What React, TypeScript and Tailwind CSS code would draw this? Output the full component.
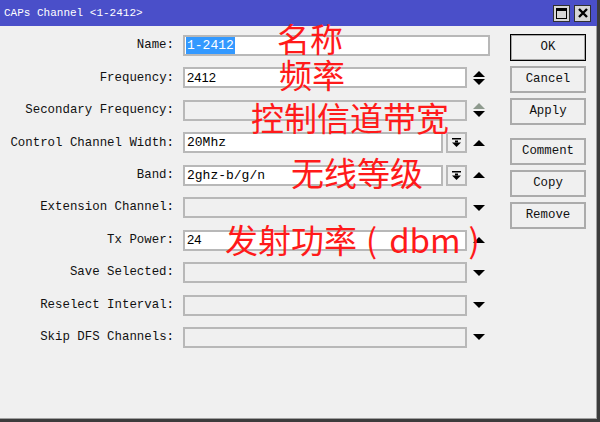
import React from 'react';

type Trail = 'updown' | 'updown-dim' | 'up' | 'down' | 'none';

type Row = {
  label: string;
  value?: string;
  mono?: boolean;
  selected?: boolean;
  enabled?: boolean;
  dropdown?: boolean;
  trail: Trail;
  wide?: boolean;
};

const rows: Row[] = [
  { label: 'Name:', value: '1-2412', mono: true, selected: true, enabled: true, trail: 'none', wide: true },
  { label: 'Frequency:', value: '2412', enabled: true, trail: 'updown' },
  { label: 'Secondary Frequency:', trail: 'updown-dim' },
  { label: 'Control Channel Width:', value: '20Mhz', mono: true, enabled: true, dropdown: true, trail: 'up' },
  { label: 'Band:', value: '2ghz-b/g/n', mono: true, enabled: true, dropdown: true, trail: 'up' },
  { label: 'Extension Channel:', trail: 'down' },
  { label: 'Tx Power:', value: '24', enabled: true, trail: 'up' },
  { label: 'Save Selected:', trail: 'down' },
  { label: 'Reselect Interval:', trail: 'down' },
  { label: 'Skip DFS Channels:', trail: 'down' },
];

const Up = ({ color = '#000' }: { color?: string }) => (
  <svg width="12" height="6" viewBox="0 0 12 6">
    <polygon points="0,6 12,6 6,0" fill={color} />
  </svg>
);

const Down = ({ color = '#000' }: { color?: string }) => (
  <svg width="12" height="6" viewBox="0 0 12 6">
    <polygon points="0,0 12,0 6,6" fill={color} />
  </svg>
);

function TrailIcon({ kind }: { kind: Trail }) {
  if (kind === 'none') return null;
  return (
    <div className="ml-[6px] w-[12px] flex flex-col items-center justify-center gap-[2px]">
      {kind === 'updown' && (
        <>
          <Up />
          <Down />
        </>
      )}
      {kind === 'updown-dim' && (
        <>
          <Up color="#8e9a8e" />
          <Down />
        </>
      )}
      {kind === 'up' && <Up />}
      {kind === 'down' && <Down />}
    </div>
  );
}

function DropButton() {
  return (
    <div className="ml-[3px] w-[21px] h-[21px] border-2 border-[#b8b8b8] bg-[#f0f0f0] flex items-center justify-center">
      <svg width="9" height="9" viewBox="0 0 9 9">
        <rect x="0" y="0" width="9" height="1.5" fill="#000" />
        <rect x="3" y="2.5" width="3" height="2" fill="#000" />
        <polygon points="0,4.5 9,4.5 4.5,9" fill="#000" />
      </svg>
    </div>
  );
}

function FormRow({ row }: { row: Row }) {
  const width = row.wide ? 'w-[307px]' : row.dropdown ? 'w-[260px]' : 'w-[284px]';
  return (
    <div className="flex items-center h-[21px]">
      <div className="w-[174px] shrink-0 text-right text-[12.4px] text-[#111] whitespace-pre">{row.label}</div>
      <div
        className={`ml-[9px] shrink-0 h-[21px] ${width} border-2 border-[#b8b8b8] flex items-center pl-[1px] ${
          row.enabled ? 'bg-white' : 'bg-[#f0f0f0]'
        }`}
      >
        {row.value && (
          <span
            className={`h-[17px] flex items-center px-[1px] ${
              row.mono ? "font-['Liberation_Mono'] text-[13px]" : "font-['Liberation_Sans'] text-[13px]"
            } ${row.selected ? 'bg-[#3399ff] text-white' : 'text-black'}`}
          >
            {row.value}
          </span>
        )}
      </div>
      {row.dropdown && <DropButton />}
      <TrailIcon kind={row.trail} />
    </div>
  );
}

function SideButton({ label, primary }: { label: string; primary?: boolean }) {
  return (
    <div
      className={`w-[76px] h-[27px] flex items-center justify-center text-[12.4px] text-[#111] bg-[#f0f0f0] ${
        primary ? 'border border-black shadow-[inset_0_0_0_1px_#a8a8a8]' : 'border-2 border-[#ababab]'
      }`}
    >
      {label}
    </div>
  );
}

export default function App() {
  return (
    <div className="relative w-[600px] h-[422px] flex flex-col bg-[#f0f0f0] border-r-[3px] border-b-[3px] border-[#3c3c3c] overflow-hidden font-['Liberation_Mono','Noto_Sans_CJK_SC',monospace]">
      {/* 标题栏 */}
      <div className="h-[26px] bg-[#4a4fc9] flex items-center pl-[4px] pr-[6px]">
        <span className="text-white text-[11px]">CAPs Channel &lt;1-2412&gt;</span>
        <div className="ml-auto flex gap-[4px]">
          <div className="w-[17px] h-[17px] bg-[#d6d6d6] border border-[#303030] flex items-center justify-center">
            <div className="w-[11px] h-[11px] border border-black border-t-[3px]" />
          </div>
          <div className="w-[17px] h-[17px] bg-[#d6d6d6] border border-[#303030] flex items-center justify-center">
            <svg width="10" height="10" viewBox="0 0 10 10">
              <path d="M1 1 L9 9 M9 1 L1 9" stroke="#000" strokeWidth="2.4" />
            </svg>
          </div>
        </div>
      </div>

      {/* 表单 + 按钮 */}
      <div className="flex-1 flex border-r border-b border-[#a0a0a0]">
        <div className="w-[485px] shrink-0 flex flex-col gap-[11.45px] pt-[9px]">
          {rows.map((row) => (
            <FormRow key={row.label} row={row} />
          ))}
        </div>
        <div className="ml-[25px] pt-[8px] flex flex-col">
          <div className="flex flex-col gap-[5px]">
            <SideButton label="OK" primary />
            <SideButton label="Cancel" />
            <SideButton label="Apply" />
          </div>
          <div className="mt-[13px] flex flex-col gap-[5px]">
            <SideButton label="Comment" />
            <SideButton label="Copy" />
            <SideButton label="Remove" />
          </div>
        </div>
      </div>

      {/* 红色注释 */}
      <div className="absolute inset-0 pointer-events-none font-['Noto_Sans_CJK_SC',sans-serif] text-[33px] leading-none text-[#ff1a1a]">
        <span className="absolute left-[277px] top-[22px]">名称</span>
        <span className="absolute left-[279px] top-[58px]">频率</span>
        <span className="absolute left-[251px] top-[101px]">控制信道带宽</span>
        <span className="absolute left-[291px] top-[156px]">无线等级</span>
        <span className="absolute left-[225px] top-[223px] flex whitespace-pre">
          <span>发射功率</span>
          <span className="ml-[9px]">(</span>
          <span className="ml-[12px]">dbm</span>
          <span className="ml-[8px]">)</span>
        </span>
      </div>
    </div>
  );
}
